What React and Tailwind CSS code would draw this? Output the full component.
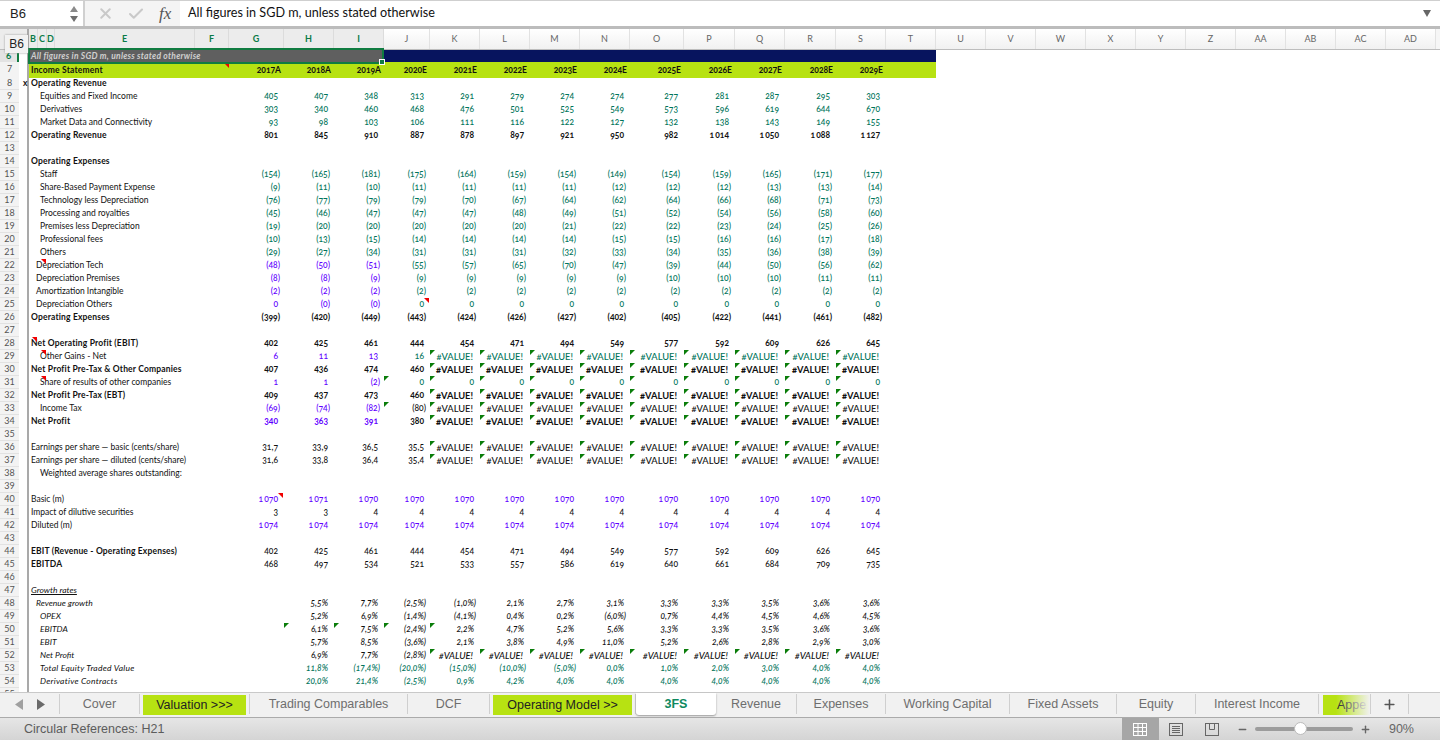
import React from "react";
import { X, Check, Plus, Minus } from "lucide-react";

const GRID = "grid grid-cols-[19px_10px_9px_9px_8px_140px_34px_55px_50px_50px_46px_50px_50px_50px_50px_54px_51px_50px_51px_50px_50px_50px_50px_50px_50px_50px_50px_50px_50px_50px_50px_1fr]";
const COLS = ["B","C","D","E","F","G","H","I","J","K","L","M","N","O","P","Q","R","S","T","U","V","W","X","Y","Z","AA","AB","AC","AD"];
const GREEN = "text-[#00745a]";
const PURPLE = "text-[#5f00ff]";
const BLACK = "text-[#111]";
const V = "#VALUE!";

const split = (s) => s.split(" ").map((v) => v.replace("_", "\u2009"));
const vals = (s) => split(s.replace(/\bV\b/g, V));
const same = (v) => Array(13).fill(v);
const afterJ = Array(9).fill("V").join(" ");

const rows = [
  { n: 8, label: "Operating Revenue", bold: true, marker: "x" },
  { n: 9, label: "Equities and Fixed Income", lvl: 2, v: vals("405 407 348 313 291 279 274 274 277 281 287 295 303"), color: () => GREEN },
  { n: 10, label: "Derivatives", lvl: 2, v: vals("303 340 460 468 476 501 525 549 573 596 619 644 670"), color: () => GREEN },
  { n: 11, label: "Market Data and Connectivity", lvl: 2, v: vals("93 98 103 106 111 116 122 127 132 138 143 149 155"), color: () => GREEN },
  { n: 12, label: "Operating Revenue", bold: true, v: vals("801 845 910 887 878 897 921 950 982 1_014 1_050 1_088 1_127") },
  { n: 13 },
  { n: 14, label: "Operating Expenses", bold: true },
  { n: 15, label: "Staff", lvl: 2, v: vals("(154) (165) (181) (175) (164) (159) (154) (149) (154) (159) (165) (171) (177)"), color: () => GREEN },
  { n: 16, label: "Share-Based Payment Expense", lvl: 2, v: vals("(9) (11) (10) (11) (11) (11) (11) (12) (12) (12) (13) (13) (14)"), color: () => GREEN },
  { n: 17, label: "Technology less Depreciation", lvl: 2, v: vals("(76) (77) (79) (79) (70) (67) (64) (62) (64) (66) (68) (71) (73)"), color: () => GREEN },
  { n: 18, label: "Processing and royalties", lvl: 2, v: vals("(45) (46) (47) (47) (47) (48) (49) (51) (52) (54) (56) (58) (60)"), color: () => GREEN },
  { n: 19, label: "Premises less Depreciation", lvl: 2, v: vals("(19) (20) (20) (20) (20) (20) (21) (22) (22) (23) (24) (25) (26)"), color: () => GREEN },
  { n: 20, label: "Professional fees", lvl: 2, v: vals("(10) (13) (15) (14) (14) (14) (14) (15) (15) (16) (16) (17) (18)"), color: () => GREEN },
  { n: 21, label: "Others", lvl: 2, v: vals("(29) (27) (34) (31) (31) (31) (32) (33) (34) (35) (36) (38) (39)"), color: () => GREEN },
  { n: 22, label: "Depreciation Tech", lvl: 1, note: "left-[12px]", v: vals("(48) (50) (51) (55) (57) (65) (70) (47) (39) (44) (50) (56) (62)"), color: (i) => (i < 3 ? PURPLE : GREEN) },
  { n: 23, label: "Depreciation Premises", lvl: 1, v: vals("(8) (8) (9) (9) (9) (9) (9) (9) (10) (10) (10) (11) (11)"), color: (i) => (i < 3 ? PURPLE : GREEN) },
  { n: 24, label: "Amortization Intangible", lvl: 1, v: same("(2)"), color: (i) => (i < 3 ? PURPLE : GREEN) },
  { n: 25, label: "Depreciation Others", lvl: 1, v: vals("0 (0) (0) 0 0 0 0 0 0 0 0 0 0"), color: (i) => (i < 3 ? PURPLE : GREEN), red: [3] },
  { n: 26, label: "Operating Expenses", bold: true, v: vals("(399) (420) (449) (443) (424) (426) (427) (402) (405) (422) (441) (461) (482)") },
  { n: 27 },
  { n: 28, label: "Net Operating Profit (EBIT)", bold: true, note: "left-[3px]", v: vals("402 425 461 444 454 471 494 549 577 592 609 626 645") },
  { n: 29, label: "Other Gains - Net", lvl: 2, note: "left-[12px]", v: vals("6 11 13 16 " + afterJ), color: (i) => (i < 3 ? PURPLE : GREEN), flags: [4, 5, 6, 7, 8, 9, 10, 11, 12] },
  { n: 30, label: "Net Profit Pre-Tax & Other Companies", bold: true, v: vals("407 436 474 460 " + afterJ), flags: [4, 5, 6, 7, 8, 9, 10, 11, 12] },
  { n: 31, label: "Share of results of other companies", lvl: 2, note: "left-[12px]", v: vals("1 1 (2) 0 0 0 0 0 0 0 0 0 0"), color: (i) => (i < 3 ? PURPLE : GREEN), flags: [3, 4, 5, 6, 7, 8, 9, 10, 11, 12] },
  { n: 32, label: "Net Profit Pre-Tax (EBT)", bold: true, v: vals("409 437 473 460 " + afterJ), flags: [4, 5, 6, 7, 8, 9, 10, 11, 12] },
  { n: 33, label: "Income Tax", lvl: 2, v: vals("(69) (74) (82) (80) " + afterJ), color: (i) => (i < 3 ? PURPLE : BLACK), flags: [3, 4, 5, 6, 7, 8, 9, 10, 11, 12] },
  { n: 34, label: "Net Profit", bold: true, v: vals("340 363 391 380 " + afterJ), color: (i) => (i < 3 ? PURPLE : BLACK), flags: [4, 5, 6, 7, 8, 9, 10, 11, 12] },
  { n: 35 },
  { n: 36, label: "Earnings per share — basic (cents/share)", v: vals("31,7 33,9 36,5 35,5 " + afterJ), flags: [4, 5, 6, 7, 8, 9, 10, 11, 12] },
  { n: 37, label: "Earnings per share — diluted (cents/share)", v: vals("31,6 33,8 36,4 35,4 " + afterJ), flags: [4, 5, 6, 7, 8, 9, 10, 11, 12] },
  { n: 38, label: "Weighted average shares outstanding:", lvl: 2 },
  { n: 39 },
  { n: 40, label: "Basic (m)", v: vals("1_070 1_071 1_070 1_070 1_070 1_070 1_070 1_070 1_070 1_070 1_070 1_070 1_070"), color: () => PURPLE, red: [0] },
  { n: 41, label: "Impact of dilutive securities", v: vals("3 3 4 4 4 4 4 4 4 4 4 4 4") },
  { n: 42, label: "Diluted (m)", v: same("1\u2009074"), color: () => PURPLE },
  { n: 43 },
  { n: 44, label: "EBIT (Revenue - Operating Expenses)", bold: true, plain: true, v: vals("402 425 461 444 454 471 494 549 577 592 609 626 645") },
  { n: 45, label: "EBITDA", bold: true, plain: true, v: vals("468 497 534 521 533 557 586 619 640 661 684 709 735") },
  { n: 46 },
  { n: 47, label: "Growth rates", italic: true, under: true },
  { n: 48, label: "Revenue growth", lvl: 1, italic: true, v: vals("_ 5,5% 7,7% (2,5%) (1,0%) 2,1% 2,7% 3,1% 3,3% 3,3% 3,5% 3,6% 3,6%") },
  { n: 49, label: "OPEX", lvl: 2, italic: true, v: vals("_ 5,2% 6,9% (1,4%) (4,1%) 0,4% 0,2% (6,0%) 0,7% 4,4% 4,5% 4,6% 4,5%") },
  { n: 50, label: "EBITDA", lvl: 2, italic: true, v: vals("_ 6,1% 7,5% (2,4%) 2,2% 4,7% 5,2% 5,6% 3,3% 3,3% 3,5% 3,6% 3,6%"), flags: [1, 2, 3, 4] },
  { n: 51, label: "EBIT", lvl: 2, italic: true, v: vals("_ 5,7% 8,5% (3,6%) 2,1% 3,8% 4,9% 11,0% 5,2% 2,6% 2,8% 2,9% 3,0%") },
  { n: 52, label: "Net Profit", lvl: 2, italic: true, v: vals("_ 6,9% 7,7% (2,8%) " + afterJ), flags: [4, 5, 6, 7, 8, 9, 10, 11, 12] },
  { n: 53, label: "Total Equity Traded Value", lvl: 2, italic: true, wide: true, v: vals("_ 11,8% (17,4%) (20,0%) (15,0%) (10,0%) (5,0%) 0,0% 1,0% 2,0% 3,0% 4,0% 4,0%"), color: () => GREEN },
  { n: 54, label: "Derivative Contracts", lvl: 2, italic: true, wide: true, v: vals("_ 20,0% 21,4% (2,5%) 0,9% 4,2% 4,0% 4,0% 4,0% 4,0% 4,0% 4,0% 4,0%"), color: () => GREEN },
  { n: 55 },
];

const indents = ["pl-[2px]", "pl-[7px]", "pl-[11px]"];

const RedMark = ({ className }) => (
  <span className={"absolute top-0 w-[5px] h-[5px] bg-[#f00000] [clip-path:polygon(0_0,100%_0,100%_100%)] " + className} />
);

const GreenFlag = () => (
  <span className="absolute top-0 left-0 w-[5px] h-[5px] bg-[#0a7d0a] [clip-path:polygon(0_0,100%_0,0_100%)]" />
);

const ValueCell = ({ value, row, i }) => {
  const blank = value === "" || value === "\u2009" || value === "_";
  const paren = value.startsWith("(");
  const isValue = value === V;
  const pad = isValue ? "pr-[7px] text-[9.3px]" : paren ? "pr-[4px]" : "pr-[6px]";
  const color = row.color ? row.color(i) : BLACK;
  const weight = row.bold && !row.plain ? "font-bold" : "font-medium";
  const slant = row.italic ? "italic" : "";
  return (
    <div className={`relative text-right leading-[13px] whitespace-nowrap oldstyle-nums ${pad} ${color} ${weight} ${slant}`}>
      {row.flags?.includes(i) && <GreenFlag />}
      {row.red?.includes(i) && <RedMark className="right-px" />}
      {blank ? "" : value}
    </div>
  );
};

const SheetRow = ({ row }) => {
  const v = row.v || [];
  return (
    <div className={`${GRID} h-[13px] text-[8.5px] font-['Lato',sans-serif] text-[#111]`}>
      <div className="bg-[#f3f3f3] border-b border-[#e2e2e2] text-center text-[9px] leading-[12px] text-[#555]">{row.n}</div>
      <div className="border-r-2 border-[#a9a9a9] text-center font-bold leading-[13px] pl-[4px]">{row.marker}</div>
      <div className={`col-span-5 relative leading-[13px] whitespace-nowrap ${indents[row.lvl || 0]} ${row.bold ? "font-bold tracking-[0.17px]" : ""} ${row.italic ? "italic" : ""} ${row.under ? "underline" : ""} ${row.wide ? "tracking-[0.25px]" : ""}`}>
        {row.note && <RedMark className={row.note} />}
        {row.label}
      </div>
      {v.map((value, i) => (
        <ValueCell key={i} value={value} row={row} i={i} />
      ))}
    </div>
  );
};

const ColumnHeader = () => (
  <div className={`${GRID} h-[21px] border-b border-[#bdbdbd] text-[9px] font-['Lato',sans-serif] leading-[20px] text-center`}>
    <div className="col-span-2 bg-[#ececec] border-r-2 border-[#a9a9a9]" />
    {COLS.map((c, i) => (
      <div key={c} className={i < 8 ? "bg-[#ececec] border-r border-[#dcdcdc] text-[#0b7a47] font-bold" : "bg-gradient-to-b from-white to-[#f1f1f1] border-r border-[#e2e2e2] text-[#666]"}>
        {c}
      </div>
    ))}
    <div className="bg-[#f6f6f6]" />
  </div>
);

const TitleRows = () => (
  <>
    <div className={`${GRID} h-[12px]`}>
      <div className="bg-[#e3e3e3] text-center text-[9px] leading-[12px] font-bold text-[#0b7a47] border-r-2 border-[#107c41] font-['Lato',sans-serif]">6</div>
      <div className="border-r-2 border-[#a9a9a9]" />
      <div className="col-span-8 bg-[#5f5f5f] pl-[2px] text-[8.5px] leading-[12px] italic font-bold tracking-[0.25px] text-[#cfcfcf] font-['Lato',sans-serif] whitespace-nowrap">
        All figures in SGD m, unless stated otherwise
      </div>
      <div className="col-span-11 bg-[#07145e]" />
    </div>
    <div className={`${GRID} h-[15px] text-[8.5px] font-['Lato',sans-serif] text-[#111]`}>
      <div className="bg-[#f3f3f3] border-b border-[#e2e2e2] text-center text-[9px] leading-[14px] text-[#555]">7</div>
      <div className="border-r-2 border-[#a9a9a9]" />
      <div className="col-span-5 relative bg-[#b7e212] pl-[2px] leading-[16px] font-bold tracking-[0.17px]">
        <RedMark className="left-[195px] top-[1px]" />
        Income Statement
      </div>
      {["2017A", "2018A", "2019A", "2020E", "2021E", "2022E", "2023E", "2024E", "2025E", "2026E", "2027E", "2028E", "2029E"].map((y) => (
        <div key={y} className="bg-[#b7e212] text-right pr-[3px] leading-[16px] font-bold oldstyle-nums">{y}</div>
      ))}
      <div className="bg-[#b7e212]" />
    </div>
  </>
);

const FormulaBar = () => (
  <div className="flex h-[28px] shrink-0 items-stretch bg-[#f4f4f4] border-t border-[#cfcfcf] border-b-2 border-b-[#bcbcbc]">
    <div className="w-[85px] flex items-center justify-between bg-white pl-[10px] pr-[3px] border-r-2 border-[#d0d0d0]">
      <span className="text-[13px] text-[#222] font-['Liberation_Sans',sans-serif]">B6</span>
      <svg width="10" height="20" viewBox="0 0 10 20" className="mr-[1px]">
        <path d="M5 2 L9 8 H1 Z" fill="#8a8a8a" />
        <path d="M5 18 L9 12 H1 Z" fill="#6f6f6f" />
      </svg>
    </div>
    <div className="w-[95px] flex items-center pl-[12px]">
      <X size={17} strokeWidth={2.8} className="text-[#c9c9c9]" />
      <Check size={18} strokeWidth={2.8} className="text-[#c9c9c9] ml-[13px]" />
      <span className="ml-[14px] text-[17px] italic text-[#555] font-['Liberation_Serif',serif]">fx</span>
    </div>
    <div className="flex-1 flex items-center bg-white pl-[8px] text-[12.6px] text-[#111] font-['Lato',sans-serif]">
      All figures in SGD m, unless stated otherwise
    </div>
    <div className="w-[17px] flex items-center bg-white">
      <svg width="8" height="7" viewBox="0 0 8 7"><path d="M0 0 H8 L4 7 Z" fill="#666" /></svg>
    </div>
  </div>
);

const tabs = [
  { name: "Cover", w: "w-[80px]" },
  { name: "Valuation >>>", w: "w-[110px]", lime: true },
  { name: "Trading Comparables", w: "w-[158px]" },
  { name: "DCF", w: "w-[82px]" },
  { name: "Operating Model >>", w: "w-[146px]", lime: true },
  { name: "3FS", w: "w-[80px]", active: true },
  { name: "Revenue", w: "w-[81px]" },
  { name: "Expenses", w: "w-[89px]" },
  { name: "Working Capital", w: "w-[124px]" },
  { name: "Fixed Assets", w: "w-[107px]" },
  { name: "Equity", w: "w-[79px]" },
  { name: "Interest Income", w: "w-[123px]" },
];

const TabBar = () => (
  <div className="flex h-[26px] shrink-0 bg-[#f1f1f1] border-t border-[#c9c9c9] border-b border-b-[#ababab] text-[12.5px] font-['Liberation_Sans',sans-serif] text-[#6e6e6e]">
    <div className="w-[60px] h-[20px] flex items-center gap-[14px] pl-[15px] border-r border-[#cfcfcf] mt-[1px]">
      <svg width="8" height="11" viewBox="0 0 8 11"><path d="M8 0 V11 L0 5.500 Z" fill="#a0a0a0" /></svg>
      <svg width="8" height="11" viewBox="0 0 8 11"><path d="M0 0 V11 L8 5.500 Z" fill="#6a6a6a" /></svg>
    </div>
    {tabs.map((t) => {
      if (t.active) {
        return (
          <div key={t.name} className={`${t.w} h-[22px] flex items-center justify-center bg-white rounded-b-[3px] font-bold text-[#0f8a5f] shadow-[0_1px_2px_#999]`}>
            {t.name}
          </div>
        );
      }
      if (t.lime) {
        return (
          <div key={t.name} className={`${t.w} h-[20px] pl-[3px] pr-[3px] mt-[1px] border-r border-[#cfcfcf]`}>
            <div className="h-[20px] mt-[1px] flex items-center justify-center bg-[#b7e212] text-[#222]">{t.name}</div>
          </div>
        );
      }
      return (
        <div key={t.name} className={`${t.w} h-[20px] mt-[1px] flex items-center justify-center border-r border-[#cfcfcf]`}>
          {t.name}
        </div>
      );
    })}
    <div className="w-[52px] h-[20px] mt-[1px] pl-[4px] border-r border-[#cfcfcf]">
      <div className="relative h-[20px] mt-[1px] pl-[14px] flex items-center overflow-hidden bg-[#b7e212] text-[#222]">
        Appe
        <span className="absolute inset-y-0 right-0 w-[34px] bg-gradient-to-r from-transparent to-[#f1f1f1]" />
      </div>
    </div>
    <div className="w-[38px] h-[20px] mt-[1px] flex items-center justify-center border-r border-[#cfcfcf] text-[#555]">
      <Plus size={15} strokeWidth={2.5} />
    </div>
  </div>
);

const StatusBar = () => (
  <div className="flex h-[22px] shrink-0 items-center bg-gradient-to-b from-[#e6e6e6] to-[#d4d4d4] pl-[24px] text-[12.5px] text-[#5c5c5c] font-['Liberation_Sans',sans-serif]">
    <span>Circular References: H21</span>
    <div className="ml-auto flex items-center h-full">
      <div className="w-[37px] h-full flex items-center justify-center bg-[#a6a6a6]">
        <svg width="14" height="13" viewBox="0 0 14 13" fill="none" stroke="#fff" strokeWidth="1">
          <rect x=".5" y=".5" width="13" height="12" />
          <path d="M5 0 V13 M9.500 0 V13 M0 4.500 H14 M0 8.500 H14" />
        </svg>
      </div>
      <div className="w-[34px] flex justify-center">
        <svg width="14" height="13" viewBox="0 0 14 13" fill="none" stroke="#666" strokeWidth="1">
          <rect x=".5" y=".5" width="13" height="12" />
          <path d="M3 3.500 H11 M3 5.500 H11 M3 7.500 H11 M3 9.500 H11" />
        </svg>
      </div>
      <div className="w-[38px] flex justify-center">
        <svg width="14" height="13" viewBox="0 0 14 13" fill="none" stroke="#666" strokeWidth="1">
          <rect x=".5" y=".5" width="13" height="12" />
          <path d="M4.500 0 V6.500 H9.500 V0" />
        </svg>
      </div>
      <Minus size={11} strokeWidth={3} className="ml-[6px] text-[#666]" />
      <div className="relative w-[98px] h-[4px] ml-[7px] rounded-full bg-[#9c9c9c]">
        <span className="absolute left-[39px] -top-[5px] w-[13px] h-[13px] rounded-full bg-white border border-[#bbb]" />
      </div>
      <Plus size={11} strokeWidth={3} className="ml-[7px] text-[#666]" />
      <span className="ml-[18px] mr-[26px] text-[#666]">90%</span>
    </div>
  </div>
);

export default function App() {
  return (
    <div className="w-[1440px] h-[740px] flex flex-col overflow-hidden bg-white">
      <FormulaBar />
      <div className="relative flex-1 min-h-0 overflow-hidden border-t border-[#bcbcbc]">
        <ColumnHeader />
        <TitleRows />
        {rows.map((row) => (
          <SheetRow key={row.n} row={row} />
        ))}
        {/* selected cell outline and the name tip sit over the grid */}
        <div className="absolute left-[28px] top-[19px] w-[356px] h-[16px] border-2 border-[#107c41]">
          <span className="absolute -right-[3px] -bottom-[3px] w-[6px] h-[6px] bg-[#107c41] border border-white" />
        </div>
        <div className="absolute left-[5px] top-[6px] w-[23px] h-[18px] bg-[#f2f2f2] shadow-[0_0_2px_#999] text-center text-[12px] leading-[18px] text-[#222] font-['Liberation_Sans',sans-serif]">
          B6
        </div>
      </div>
      <TabBar />
      <StatusBar />
    </div>
  );
}
